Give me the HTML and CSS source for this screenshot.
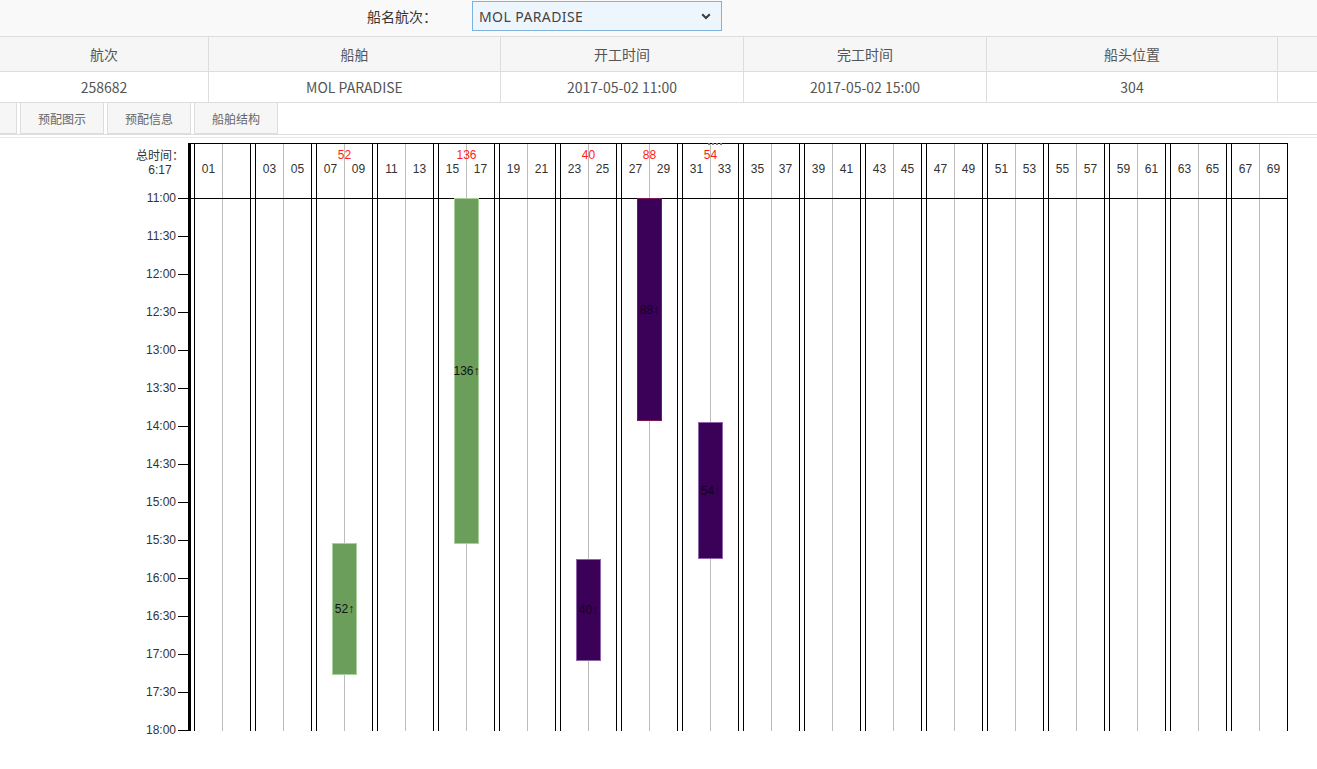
FILE: index.html
```html
<!DOCTYPE html>
<html lang="zh">
<head>
<meta charset="utf-8">
<title>预配图示</title>
<link rel="stylesheet" href="styles.css">
</head>
<body>
<div class="topbar">
  <label class="ship-label">船名航次：</label>
  <div class="select">
    <span>MOL PARADISE</span>
    <svg class="chev" width="10" height="7" viewBox="0 0 10 7"><path d="M1.2 1.2 L5 5 L8.8 1.2" fill="none" stroke="#3a3a3a" stroke-width="2"/></svg>
  </div>
</div>

<div class="info-row info-head">
  <div class="cell">航次</div>
  <div class="cell">船舶</div>
  <div class="cell">开工时间</div>
  <div class="cell">完工时间</div>
  <div class="cell">船头位置</div>
  <div class="cell last"></div>
</div>
<div class="info-row info-data">
  <div class="cell">258682</div>
  <div class="cell">MOL PARADISE</div>
  <div class="cell">2017-05-02 11:00</div>
  <div class="cell">2017-05-02 15:00</div>
  <div class="cell">304</div>
  <div class="cell last"></div>
</div>

<div class="tabs">
  <div class="tab stub"></div>
  <div class="tab">预配图示</div>
  <div class="tab">预配信息</div>
  <div class="tab">船舶结构</div>
</div>
<div class="sep"></div>

<div class="chart">
  <div class="ylabels">
    <div class="yhead">
      <div class="total"><span class="zh">总时间：</span><br>6:17</div>
    </div>
    <div class="ticks">
      <div class="tick-row"><span class="tick-label">11:00</span><span class="tick-mark"></span></div>
      <div class="tick-row"><span class="tick-label">11:30</span><span class="tick-mark"></span></div>
      <div class="tick-row"><span class="tick-label">12:00</span><span class="tick-mark"></span></div>
      <div class="tick-row"><span class="tick-label">12:30</span><span class="tick-mark"></span></div>
      <div class="tick-row"><span class="tick-label">13:00</span><span class="tick-mark"></span></div>
      <div class="tick-row"><span class="tick-label">13:30</span><span class="tick-mark"></span></div>
      <div class="tick-row"><span class="tick-label">14:00</span><span class="tick-mark"></span></div>
      <div class="tick-row"><span class="tick-label">14:30</span><span class="tick-mark"></span></div>
      <div class="tick-row"><span class="tick-label">15:00</span><span class="tick-mark"></span></div>
      <div class="tick-row"><span class="tick-label">15:30</span><span class="tick-mark"></span></div>
      <div class="tick-row"><span class="tick-label">16:00</span><span class="tick-mark"></span></div>
      <div class="tick-row"><span class="tick-label">16:30</span><span class="tick-mark"></span></div>
      <div class="tick-row"><span class="tick-label">17:00</span><span class="tick-mark"></span></div>
      <div class="tick-row"><span class="tick-label">17:30</span><span class="tick-mark"></span></div>
      <div class="tick-row"><span class="tick-label">18:00</span><span class="tick-mark"></span></div>
    </div>
  </div>
  <div class="axis-line"></div>

  <div class="plot">
    <div class="plot-head">
      <div class="bay bay-head"><div class="red"></div><div class="nums"><span>01</span><span></span></div></div>
      <div class="bay bay-head"><div class="red"></div><div class="nums"><span>03</span><span>05</span></div></div>
      <div class="bay bay-head"><div class="red">52</div><div class="nums"><span>07</span><span>09</span></div></div>
      <div class="bay bay-head"><div class="red"></div><div class="nums"><span>11</span><span>13</span></div></div>
      <div class="bay bay-head"><div class="red">136</div><div class="nums"><span>15</span><span>17</span></div></div>
      <div class="bay bay-head"><div class="red"></div><div class="nums"><span>19</span><span>21</span></div></div>
      <div class="bay bay-head"><div class="red">40</div><div class="nums"><span>23</span><span>25</span></div></div>
      <div class="bay bay-head"><div class="red">88</div><div class="nums"><span>27</span><span>29</span></div></div>
      <div class="bay bay-head"><span class="dots"></span><div class="red">54</div><div class="nums"><span>31</span><span>33</span></div></div>
      <div class="bay bay-head"><div class="red"></div><div class="nums"><span>35</span><span>37</span></div></div>
      <div class="bay bay-head"><div class="red"></div><div class="nums"><span>39</span><span>41</span></div></div>
      <div class="bay bay-head"><div class="red"></div><div class="nums"><span>43</span><span>45</span></div></div>
      <div class="bay bay-head"><div class="red"></div><div class="nums"><span>47</span><span>49</span></div></div>
      <div class="bay bay-head"><div class="red"></div><div class="nums"><span>51</span><span>53</span></div></div>
      <div class="bay bay-head"><div class="red"></div><div class="nums"><span>55</span><span>57</span></div></div>
      <div class="bay bay-head"><div class="red"></div><div class="nums"><span>59</span><span>61</span></div></div>
      <div class="bay bay-head"><div class="red"></div><div class="nums"><span>63</span><span>65</span></div></div>
      <div class="bay bay-head"><div class="red"></div><div class="nums"><span>67</span><span>69</span></div></div>
    </div>
    <div class="plot-body">
      <div class="bay"></div>
      <div class="bay"></div>
      <div class="bay"><div class="blk green" style="top:344px;height:132px">52↑</div></div>
      <div class="bay"></div>
      <div class="bay"><div class="blk green" style="top:-1px;height:346px">136↑</div></div>
      <div class="bay"></div>
      <div class="bay"><div class="blk purple" style="top:360px;height:102px">40↑</div></div>
      <div class="bay"><div class="blk purple dark" style="top:-1px;height:223px">88↑</div></div>
      <div class="bay"><div class="blk purple" style="top:223px;height:137px">54↑</div></div>
      <div class="bay"></div>
      <div class="bay"></div>
      <div class="bay"></div>
      <div class="bay"></div>
      <div class="bay"></div>
      <div class="bay"></div>
      <div class="bay"></div>
      <div class="bay"></div>
      <div class="bay"></div>
    </div>
  </div>
</div>
</body>
</html>
```

FILE: styles.css
```css
* { box-sizing: border-box; }

body {
  margin: 0;
  background: #fff;
  color: #333;
  font-family: "Noto Sans CJK SC", "Noto Sans", sans-serif;
}

/* ---------- top bar ---------- */
.topbar {
  height: 36px;
  background: #f9f9f9;
  display: flex;
  align-items: flex-start;
  padding-left: 367px;
}
.ship-label {
  width: 105px;
  margin-top: 6px;
  font-size: 14px;
  line-height: 20px;
  color: #333;
}
.select {
  margin-top: 1px;
  width: 250px;
  height: 30px;
  border: 1px solid #80b3db;
  background: #eef6fd;
  display: flex;
  align-items: center;
  justify-content: space-between;
  padding: 0 10px 0 6px;
  font-family: "Noto Sans", sans-serif;
  font-size: 14px;
  letter-spacing: 0.4px;
  color: #444;
}
.chev { display: block; }

/* ---------- info table ---------- */
.info-row {
  display: grid;
  grid-template-columns: 209px 292px 243px 243px 291px 1fr;
}
.info-head {
  height: 36px;
  border-top: 1px solid #dddddd;
  border-bottom: 1px solid #dddddd;
  background: #f6f6f6;
}
.info-data {
  height: 31px;
  border-bottom: 1px solid #dddddd;
  background: #fff;
}
.cell {
  border-right: 1px solid #dddddd;
  display: flex;
  align-items: center;
  justify-content: center;
  font-size: 14px;
  color: #555;
}
.cell.last { border-right: none; }

/* ---------- tabs ---------- */
.tabs {
  display: flex;
  gap: 3px;
  height: 31px;
}
.tab {
  width: 84px;
  border: 1px solid #dddddd;
  border-top: none;
  background: #f6f6f6;
  display: flex;
  align-items: center;
  justify-content: center;
  font-size: 12px;
  color: #666;
}
.tab.stub {
  width: 17px;
  border-left: none;
}
.sep {
  height: 4px;
  border-top: 1px solid #dddddd;
  border-bottom: 1px solid #e8e8e8;
}

/* ---------- chart ---------- */
.chart {
  display: flex;
  align-items: flex-start;
  margin-top: 5px;
  font-family: "Liberation Sans", Arial, sans-serif;
  font-size: 12px;
  color: #333;
}
.ylabels {
  flex: 0 0 188px;
  width: 188px;
}
.axis-line {
  flex: 0 0 3px;
  width: 3px;
  height: 588px;
  background: #000;
}
.yhead {
  height: 55px;
  padding-top: 5px;
  display: flex;
  justify-content: flex-end;
}
.total {
  width: 56px;
  text-align: center;
  line-height: 14px;
}
.total .zh {
  font-family: "Noto Sans CJK SC", sans-serif;
  font-size: 12px;
  line-height: 14px;
}
.ticks {
  margin-top: -19px;
  display: flex;
  flex-direction: column;
}
.tick-row {
  flex: 0 0 38px;
  height: 38px;
  display: flex;
  justify-content: flex-end;
  align-items: flex-start;
}
.tick-label {
  margin-top: 12px;
  margin-right: 2px;
  line-height: 14px;
}
.tick-mark {
  margin-top: 19px;
  width: 10px;
  height: 1px;
  background: #000;
}

.plot {
  display: flex;
  flex-direction: column;
}
.plot-head,
.plot-body {
  display: flex;
  gap: 4px;
  padding-left: 3px;
  border-top: 1px solid #000;
}
.plot-head { flex: 0 0 55px; height: 55px; }
.plot-body { flex: 0 0 533px; height: 533px; }

.bay {
  position: relative;
  flex-shrink: 0;
  width: 57px;
  border-left: 1px solid #000;
  border-right: 1px solid #000;
  background: linear-gradient(to right, transparent 27px, #bdbdbd 27px, #bdbdbd 28px, transparent 28px);
}
.bay-head { padding-top: 4px; }
.red {
  height: 14px;
  line-height: 14px;
  text-align: center;
  color: #ff1a1a;
}
.nums { display: flex; }
.nums span {
  width: 27px;
  line-height: 14px;
  text-align: center;
}
.nums span + span { margin-left: 1px; }

.dots {
  position: absolute;
  left: 25px;
  top: -1px;
  width: 14px;
  border-top: 2px dotted #7a7a7a;
}

.blk {
  position: absolute;
  left: 15px;
  width: 25px;
  display: flex;
  align-items: center;
  justify-content: center;
  white-space: nowrap;
  font-size: 12px;
}
.green {
  background: #6a9e5a;
  border: 1px solid #a7d09a;
  color: #111;
}
.purple {
  background: #3b0058;
  border: 1px solid #8c66a8;
  color: #14001f;
}
.purple.dark { border-color: #7c1554; }
```
